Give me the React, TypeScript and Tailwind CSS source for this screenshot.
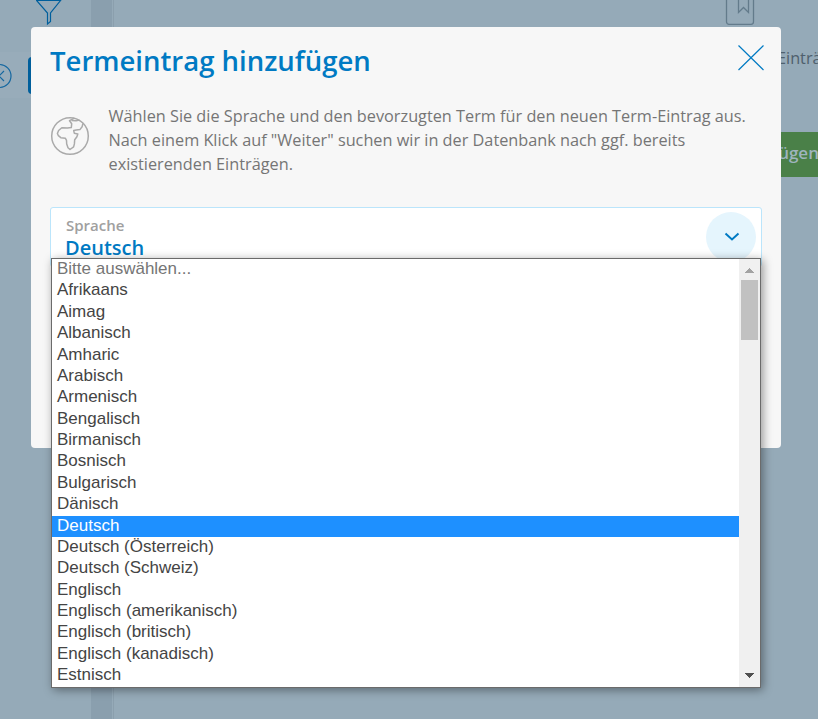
import { ReactNode } from 'react';

const languages = [
  'Bitte auswählen...',
  'Afrikaans',
  'Aimag',
  'Albanisch',
  'Amharic',
  'Arabisch',
  'Armenisch',
  'Bengalisch',
  'Birmanisch',
  'Bosnisch',
  'Bulgarisch',
  'Dänisch',
  'Deutsch',
  'Deutsch (Österreich)',
  'Deutsch (Schweiz)',
  'Englisch',
  'Englisch (amerikanisch)',
  'Englisch (britisch)',
  'Englisch (kanadisch)',
  'Estnisch',
];

const selected = 'Deutsch';

const optionColor = (name: string, index: number) => {
  if (name === selected) return 'bg-[#1e90ff] text-white';
  return index === 0 ? 'text-[#757575]' : 'text-[#444444]';
};

const GlobeIcon = () => (
  <svg width="40" height="40" viewBox="0 0 40 40" fill="none" stroke="#aaaaaa" strokeWidth="1.5" strokeLinejoin="round">
    <circle cx="20" cy="20" r="18.3" />
    <path d="M24 2.300 19.500 4.700l2.200 3-.4 3.900-3.800.5-5.700-.3-3.200 2.700-1.200 3 1 2.200 2.400 2 4.500.5 1.200 2.100.2 3.700 1.300 3.700 2 1.800 3.600-2.600.8-3 .3-4.200 2.200-3 .9-2.800-3.500-.7-.6-2.600 2.500-.5 3.700-.5 2.200-2.800.8-3.500" />
    <path d="m21.500 4.500 4.500.2 3.500-.7" />
  </svg>
);

const Backdrop = () => (
  <div className="flex h-full w-full bg-[#95aab8]">
    <aside className="flex h-full w-[91px] flex-col">
      <div className="flex h-[52px] pl-[36px]">
        <svg width="26" height="26" viewBox="0 0 26 26" fill="none" stroke="#005f9c" strokeWidth="1.2">
          <path d="M.5.5h24L14.5 13v8.500l-3 2.500V13Z" />
        </svg>
      </div>
      <div className="flex h-[46px] items-center justify-between bg-[#98acba]">
        <svg width="12" height="26" viewBox="0 0 12 26" className="mt-[2px]" fill="none" stroke="#1467a0" strokeWidth="1.2">
          <circle cx="-0.5" cy="13" r="11.5" />
          <path d="m4 8-5 5 5 5" />
        </svg>
        <div className="mr-[23px] h-[37px] w-[40px] rounded bg-[#005f9c]" />
      </div>
    </aside>
    <div className="h-full w-[21px] bg-[#8a9fae]" />
    <div className="mr-px ml-px h-full w-px bg-[#8b9fad]" />
    <main className="flex min-w-0 flex-1 flex-col items-end">
      <div className="flex h-[47px] w-[93px]">
        <svg width="30" height="26" viewBox="0 0 30 26" fill="none" stroke="#637b8b" strokeWidth="1.3">
          <rect x="1.5" y="-6" width="27" height="30.3" rx="2.5" />
          <path d="M13.500-2v14.500l5-5 5 5V-2" />
        </svg>
      </div>
      <p className="w-[41px] overflow-hidden text-[16.25px] leading-[22px] whitespace-nowrap text-[#4f606d]">Einträge</p>
      <div className="mt-[63px] flex h-[45px] w-[60px] items-center overflow-hidden bg-[#4a8048] pb-[3px] pl-[14px] text-[17px] font-semibold whitespace-nowrap text-[#9fb4bd]">
        fügen
      </div>
    </main>
  </div>
);

const Scrollbar = () => (
  <div className="flex w-[21px] flex-col items-center justify-between bg-[#f0f0f0]">
    <div className="flex w-full flex-col items-center">
      <div className="flex h-[21px] items-center">
        <svg width="9" height="5" viewBox="0 0 9 5" className="mt-px" shapeRendering="crispEdges">
          <path d="M0 5 4.5 0 9 5Z" fill="#a3a3a3" />
        </svg>
      </div>
      <div className="h-[60px] w-[17px] bg-[#c1c1c1]" />
    </div>
    <svg width="9" height="5" viewBox="0 0 9 5" className="mb-[9px]" shapeRendering="crispEdges">
      <path d="M0 0h9L4.5 5Z" fill="#505050" />
    </svg>
  </div>
);

const LanguageList = () => (
  <div className="absolute top-[258px] left-[51px] z-20 flex h-[430px] w-[710px] border border-[#6b6b6b] bg-white shadow-[2px_2px_9px_rgba(0,0,0,0.4)]">
    <ul className="flex-1 overflow-hidden font-['Liberation_Sans',sans-serif] text-[17px]">
      {languages.map((name, index) => (
        <li key={name} className={`h-[21.375px] pl-[5px] leading-[19px] ${optionColor(name, index)}`}>
          {name}
        </li>
      ))}
    </ul>
    <Scrollbar />
  </div>
);

const Modal = ({ children }: { children: ReactNode }) => (
  <div className="absolute top-[27px] left-[31px] z-10 h-[421px] w-[750px] rounded bg-[#f7f7f7] px-[19px] pt-4">
    {children}
  </div>
);

const App = () => {
  return (
    <div className="relative h-[719px] w-[818px] overflow-hidden font-['Open_Sans',sans-serif]">
      <Backdrop />
      <Modal>
        <div className="flex justify-between">
          <h1 className="text-[27.5px] leading-[36px] font-semibold text-[#007ac3]">Termeintrag hinzufügen</h1>
          <svg width="28" height="28" viewBox="0 0 28 28" className="-mr-[3px]" fill="none" stroke="#007ac3" strokeWidth="1.2">
            <path d="m1.500 2.500 25 24.500M26.500 2.500l-25 24.500" />
          </svg>
        </div>
        <div className="mt-[25px] flex items-start">
          <div className="mt-[12px] w-[58.5px]">
            <GlobeIcon />
          </div>
          <p className="text-[16.27px] leading-[24px] whitespace-nowrap text-[#757575]">
            Wählen Sie die Sprache und den bevorzugten Term für den neuen Term-Eintrag aus.
            <br />
            Nach einem Klick auf "Weiter" suchen wir in der Datenbank nach ggf. bereits
            <br />
            existierenden Einträgen.
          </p>
        </div>
        <div className="mt-[31px] flex h-[60px] justify-between rounded-[3px] border border-[#bbe5fb] bg-white pt-[4px] pr-[5px] pl-[14px]">
          <div className="pt-[2px]">
            <div className="pl-px text-[15px] leading-[22px] font-semibold text-[#a0a0a0]">Sprache</div>
            <div className="text-[20px] leading-[23px] font-semibold text-[#007ac3]">{selected}</div>
          </div>
          <div className="flex h-[50px] w-[50px] items-center justify-center rounded-full bg-[#e5f5fd]">
            <svg width="16" height="10" viewBox="0 0 16 10" className="-mt-px ml-[2px]" fill="none" stroke="#007ac3" strokeWidth="2">
              <path d="m1.500 1.500 6.500 6 6.500-6" />
            </svg>
          </div>
        </div>
      </Modal>
      <LanguageList />
    </div>
  );
};

export default App;
